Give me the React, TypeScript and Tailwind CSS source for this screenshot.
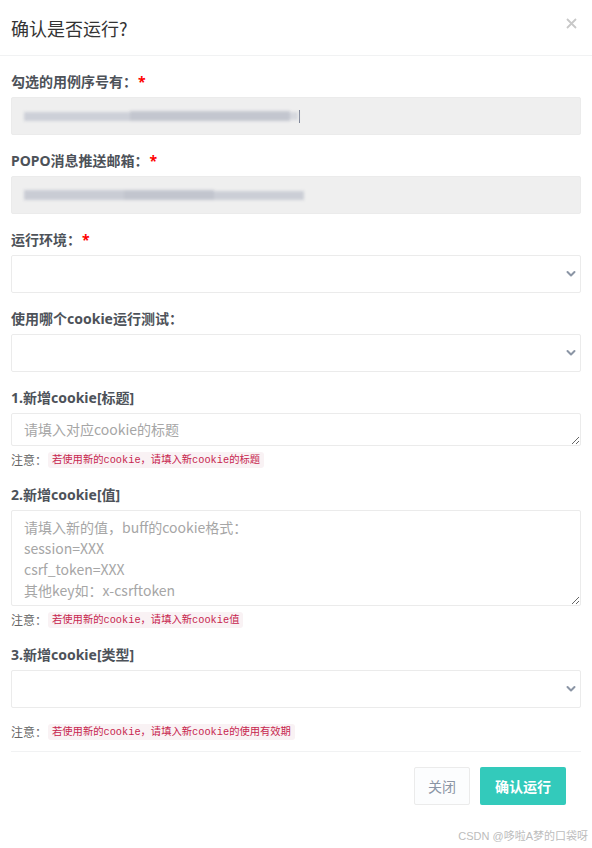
import React from "react";

const cjk = "font-['Noto_Sans_CJK_SC',sans-serif]";

function Label({ text, required }: { text: string; required?: boolean }) {
  return (
    <div className="h-[20px] mb-[5px] text-[14px] leading-[20px] font-bold text-[#4d5259] font-['Noto_Sans','Noto_Sans_CJK_SC',sans-serif]">
      {text}
      {required && <span className="text-[#ff0000] ml-[1px]">*</span>}
    </div>
  );
}

function Chevron() {
  return (
    <svg
      className="absolute right-[4px] top-1/2 -translate-y-1/2"
      width="10"
      height="7"
      viewBox="0 0 10 7"
      fill="none"
    >
      <polyline points="1.5,1.5 5,5 8.5,1.5" stroke="#8b95a5" strokeWidth="2" strokeLinecap="round" strokeLinejoin="round" />
    </svg>
  );
}

function SelectBox() {
  return (
    <div className="relative h-[38px] w-full border border-[#ebebeb] rounded-[2px] bg-white">
      <Chevron />
    </div>
  );
}

function Note({ text }: { text: string }) {
  return (
    <div className="h-[20px] flex items-center text-[12px] text-[#666]">
      <span>注意：</span>
      <code className="ml-[1px] px-[4px] py-[2px] leading-[12px] rounded-[3px] bg-[#f9f2f4] text-[#c7254e] text-[10.3px] font-['Liberation_Mono','Noto_Sans_CJK_SC',monospace]">
        {text}
      </code>
    </div>
  );
}

export default function App() {
  return (
    <div className={`relative w-[592px] h-[848px] bg-white overflow-hidden ${cjk}`}>
      {/* header */}
      <div className="h-[56px] px-[11px] flex items-center justify-between border-b border-[#f1f2f3]">
        <h4 className="text-[18px] leading-[24px] text-[#333]">确认是否运行?</h4>
        <svg width="11" height="11" viewBox="0 0 11 11" className="mr-[4px] -mt-[8px]">
          <path d="M1 1 L10 10 M10 1 L1 10" stroke="#c8c8c8" strokeWidth="1.8" />
        </svg>
      </div>

      <div className="px-[11px] pt-[16px]">
        <Label text="勾选的用例序号有：" required />
        <div className="h-[38px] w-full border border-[#ebebeb] rounded-[2px] bg-[#efefef] flex items-center pl-[12px]">
          <div className="flex items-center blur-[1.5px]">
            <div className="h-[9px] w-[106px] bg-[#cdd0d8]" />
            <div className="h-[10px] w-[160px] bg-[#c3c6cf]" />
            <div className="h-[8px] w-[8px] bg-[#d6d8de]" />
          </div>
          <div className="ml-[1px] h-[13px] w-[1px] bg-[#7d8597]" />
        </div>

        <div className="mt-[16px]">
          <Label text="POPO消息推送邮箱：" required />
          <div className="h-[38px] w-full border border-[#ebebeb] rounded-[2px] bg-[#efefef] flex items-center pl-[12px]">
            <div className="flex items-center blur-[1.5px]">
              <div className="h-[10px] w-[100px] bg-[#c9ccd4]" />
              <div className="h-[10px] w-[90px] bg-[#c2c5ce]" />
              <div className="h-[9px] w-[90px] bg-[#cbced6]" />
            </div>
          </div>
        </div>

        <div className="mt-[16px]">
          <Label text="运行环境：" required />
          <SelectBox />
        </div>

        <div className="mt-[16px]">
          <Label text="使用哪个cookie运行测试：" />
          <SelectBox />
        </div>

        <div className="mt-[16px]">
          <Label text="1.新增cookie[标题]" />
          <textarea
            className="block w-full h-[33px] border border-[#ebebeb] rounded-[2px] px-[12px] py-[5px] text-[14px] leading-[21px] text-[#555] placeholder:text-[#a6a6a6] outline-none resize-y"
            placeholder="请填入对应cookie的标题"
          />
          <div className="mt-[4px]">
            <Note text="若使用新的cookie，请填入新cookie的标题" />
          </div>
        </div>

        <div className="mt-[15px]">
          <Label text="2.新增cookie[值]" />
          <textarea
            className="block w-full h-[96px] border border-[#ebebeb] rounded-[2px] px-[12px] pt-[6px] pb-[4px] text-[14px] leading-[21px] text-[#555] placeholder:text-[#a6a6a6] outline-none resize-y"
            placeholder={"请填入新的值，buff的cookie格式：\nsession=XXX\ncsrf_token=XXX\n其他key如：x-csrftoken"}
          />
          <div className="mt-[4px]">
            <Note text="若使用新的cookie，请填入新cookie值" />
          </div>
        </div>

        <div className="mt-[15px]">
          <Label text="3.新增cookie[类型]" />
          <SelectBox />
          <div className="mt-[14px]">
            <Note text="若使用新的cookie，请填入新cookie的使用有效期" />
          </div>
        </div>

        {/* footer */}
        <div className="mt-[9px] border-t border-[#f1f2f3] pt-[15px] pr-[15px] flex justify-end gap-[10px]">
          <button className="h-[38px] w-[56px] border border-[#ebebeb] rounded-[2px] bg-[#fcfdfe] text-[14px] text-[#8b95a5]">
            关闭
          </button>
          <button className="h-[38px] w-[86px] rounded-[2px] bg-[#33cabb] text-[14px] font-bold text-white">
            确认运行
          </button>
        </div>
      </div>

      <div className="absolute right-[4px] bottom-[4px] text-[11px] leading-[16px] text-[#bcbcbc] font-['Liberation_Sans','Noto_Sans_CJK_SC',sans-serif]">
        CSDN @哆啦A梦的口袋呀
      </div>
    </div>
  );
}
